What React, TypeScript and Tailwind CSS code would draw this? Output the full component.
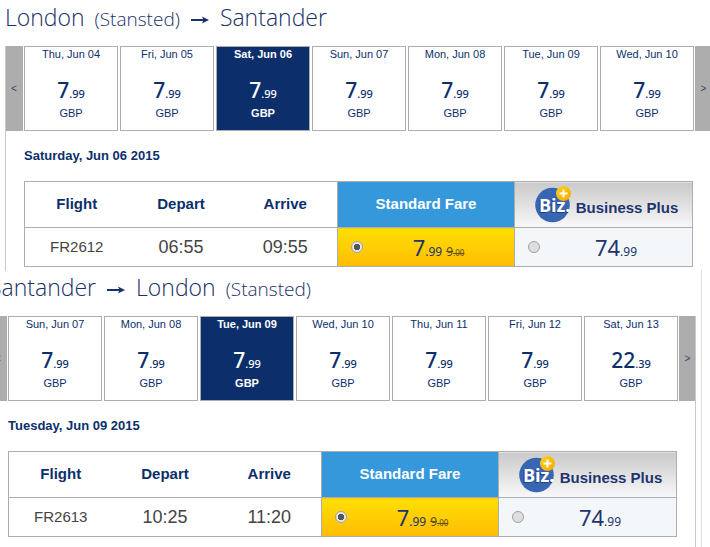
interface Day {
  label: string;
  whole: string;
  cents: string;
}

interface Flight {
  number: string;
  depart: string;
  arrive: string;
}

interface Trip {
  id: string;
  date: string;
  selected: number;
  days: Day[];
  flight: Flight;
}

const outbound: Trip = {
  id: 'outbound',
  date: 'Saturday, Jun 06 2015',
  selected: 2,
  days: [
    { label: 'Thu, Jun 04', whole: '7', cents: '99' },
    { label: 'Fri, Jun 05', whole: '7', cents: '99' },
    { label: 'Sat, Jun 06', whole: '7', cents: '99' },
    { label: 'Sun, Jun 07', whole: '7', cents: '99' },
    { label: 'Mon, Jun 08', whole: '7', cents: '99' },
    { label: 'Tue, Jun 09', whole: '7', cents: '99' },
    { label: 'Wed, Jun 10', whole: '7', cents: '99' },
  ],
  flight: { number: 'FR2612', depart: '06:55', arrive: '09:55' },
};

const inbound: Trip = {
  id: 'inbound',
  date: 'Tuesday, Jun 09 2015',
  selected: 2,
  days: [
    { label: 'Sun, Jun 07', whole: '7', cents: '99' },
    { label: 'Mon, Jun 08', whole: '7', cents: '99' },
    { label: 'Tue, Jun 09', whole: '7', cents: '99' },
    { label: 'Wed, Jun 10', whole: '7', cents: '99' },
    { label: 'Thu, Jun 11', whole: '7', cents: '99' },
    { label: 'Fri, Jun 12', whole: '7', cents: '99' },
    { label: 'Sat, Jun 13', whole: '22', cents: '39' },
  ],
  flight: { number: 'FR2613', depart: '10:25', arrive: '11:20' },
};

function Arrow() {
  return (
    <svg viewBox="0 0 18 8" className="mx-[11px] inline-block h-2 w-[18px] align-middle" aria-label="to">
      <path d="M0 4h14" stroke="#1a3068" strokeWidth="2" />
      <path d="M11 0.5L18 4L11 7.5L12.5 4Z" fill="#1a3068" />
    </svg>
  );
}

function BizLogo() {
  return (
    <svg viewBox="0 0 37 37" className="h-[37px] w-[37px] flex-shrink-0" aria-hidden="true">
      <defs>
        <linearGradient id="badge" x1="0" y1="0" x2="1" y2="1">
          <stop offset="0" stopColor="#ffd21a" />
          <stop offset="1" stopColor="#f6a800" />
        </linearGradient>
      </defs>
      <circle cx="17.5" cy="19" r="17.3" fill="#3966b2" />
      <g fontSize="18" fontWeight="700" className="font-['Open_Sans','Noto_Sans',sans-serif]">
        <text x="3" y="27" fill="#1d3f80">
          Biz.
        </text>
        <text x="4" y="26" fill="#ffffff">
          Biz.
        </text>
      </g>
      <circle cx="28.5" cy="7.5" r="7.5" fill="url(#badge)" />
      <path d="M28.5 3.5v8M24.5 7.5h8" stroke="#ffffff" strokeWidth="2" />
    </svg>
  );
}

function DayButton({ day, active }: { day: Day; active: boolean }) {
  return (
    <button
      type="button"
      aria-pressed={active}
      className={
        active
          ? 'flex h-[85px] flex-col items-center border border-[#adadad] bg-[#0c2f6c] font-bold text-white'
          : 'flex h-[85px] flex-col items-center border border-[#adadad] bg-white text-[#0c2f6c]'
      }
    >
      <span className="text-[11px] leading-[14px]">{day.label}</span>
      <span className="mt-4 font-['Noto_Sans',sans-serif] text-[21px] leading-[26px] font-medium">
        {day.whole}
        <span className="text-[11px]">.{day.cents}</span>
      </span>
      <span className="text-[11px] leading-3">GBP</span>
    </button>
  );
}

function DayStrip({ trip }: { trip: Trip }) {
  return (
    <div className="grid grid-cols-[18px_1fr_17px] gap-px">
      <button type="button" aria-label="Earlier days" className="bg-[#adadad] text-[10px] text-[#33466e]">
        &lt;
      </button>
      <div className="grid grid-cols-7 gap-0.5">
        {trip.days.map((day, i) => (
          <DayButton key={day.label} day={day} active={i === trip.selected} />
        ))}
      </div>
      <button type="button" aria-label="Later days" className="bg-[#adadad] text-[10px] text-[#33466e]">
        &gt;
      </button>
    </div>
  );
}

const radioClass =
  'size-3 flex-shrink-0 appearance-none rounded-full border border-[#a0a0a0] bg-[#dedede] checked:bg-[radial-gradient(circle,#555_0_3px,#e6e6e6_3px)]';

function FareTable({ trip }: { trip: Trip }) {
  return (
    <table className="w-full table-fixed border-collapse border border-[#adadad] text-center">
      <colgroup>
        <col className="w-[104px]" />
        <col className="w-[105px]" />
        <col className="w-[104px]" />
        <col className="w-[177px]" />
        <col className="w-[178px]" />
      </colgroup>
      <thead>
        <tr className="h-[46px] border-b border-[#adadad] text-[15px] text-[#0c2f6c]">
          <th scope="col">Flight</th>
          <th scope="col">Depart</th>
          <th scope="col">Arrive</th>
          <th scope="col" className="border-x border-[#adadad] bg-[#3598db] text-white">
            Standard Fare
          </th>
          <th scope="col" className="bg-linear-to-b from-[#cacaca] to-[#f8f8fa] p-0 text-[#21346e]">
            <div className="flex items-center justify-center gap-1 pl-1.5">
              <BizLogo />
              <span className="pt-2">Business Plus</span>
            </div>
          </th>
        </tr>
      </thead>
      <tbody>
        <tr className="h-[39px] text-[#444444]">
          <td className="text-[15px]">{trip.flight.number}</td>
          <td className="text-lg leading-5">{trip.flight.depart}</td>
          <td className="text-lg leading-5">{trip.flight.arrive}</td>
          <td className="border-x border-[#adadad] bg-linear-to-b from-[#ffdf04] to-[#ffbc04] p-0">
            <label className="flex items-center pl-[13px]">
              <input type="radio" name={trip.id} defaultChecked className={radioClass} />
              <span className="flex-1 font-['Noto_Sans',sans-serif] text-[22px] leading-8 text-[#21346e]">
                7<span className="text-xs">.99</span>
                <span className="ml-1 text-xs text-[#5c4a1c]">
                  <s>9</s>
                  <s className="text-[8px]">.00</s>
                </span>
              </span>
            </label>
          </td>
          <td className="bg-[#f3f7f9] p-0">
            <label className="flex items-center pl-[13px]">
              <input type="radio" name={trip.id} className={radioClass} />
              <span className="flex-1 font-['Noto_Sans',sans-serif] text-[22px] leading-8 text-[#21346e]">
                74<span className="text-xs">.99</span>
              </span>
            </label>
          </td>
        </tr>
      </tbody>
    </table>
  );
}

function TripPanel({ trip }: { trip: Trip }) {
  return (
    <>
      <DayStrip trip={trip} />
      <div className="px-[19px]">
        <h3 className="my-4 text-[13px] leading-[18px] font-bold text-[#0c2f6c]">{trip.date}</h3>
        <FareTable trip={trip} />
      </div>
    </>
  );
}

const headingClass =
  "h-[46px] whitespace-nowrap font-['Open_Sans',sans-serif] text-[23px] leading-[34px] font-light text-[#1a3068]";

export default function App() {
  return (
    <main className="overflow-hidden bg-white font-['Liberation_Sans',Arial,sans-serif]">
      <section className="-mr-0.5 pl-[5px]">
        <h2 className={headingClass}>
          London <span className="ml-1 text-[19px]">(Stansted)</span>
          <Arrow />
          Santander
        </h2>
        <div className="relative pb-1 before:absolute before:inset-y-0 before:left-0 before:w-px before:bg-[#c8c8c8]">
          <TripPanel trip={outbound} />
        </div>
      </section>
      <section className="-mt-px mr-2 -ml-[11px] border-r border-[#dddddd] pr-[5px]">
        <h2 className={headingClass}>
          Santander
          <Arrow />
          London <span className="ml-1 text-[19px]">(Stansted)</span>
        </h2>
        <div className="relative pb-3 after:absolute after:inset-y-0 after:right-0 after:w-px after:bg-[#c8c8c8]">
          <TripPanel trip={inbound} />
        </div>
      </section>
    </main>
  );
}
